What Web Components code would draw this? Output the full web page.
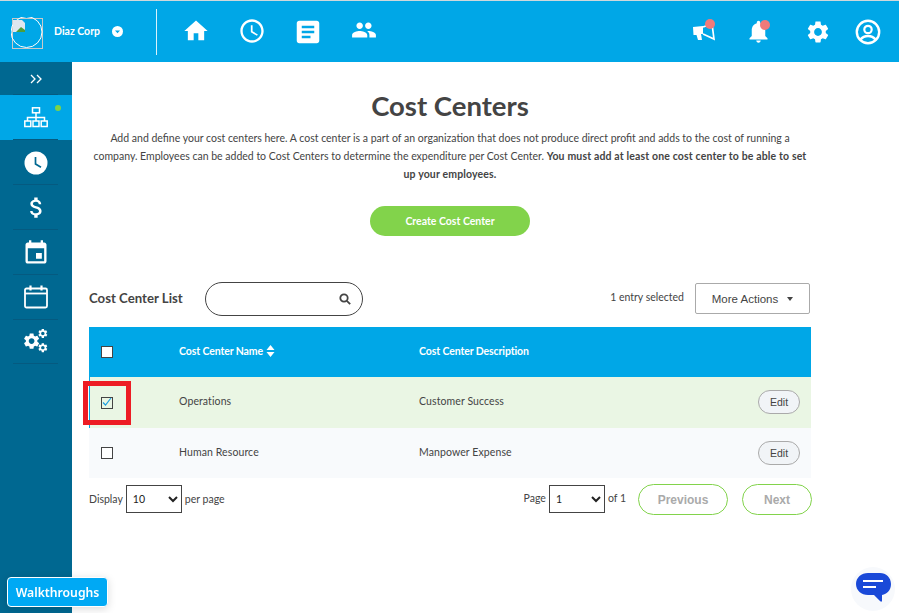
<!DOCTYPE html>
<html>
<head>
<meta charset="utf-8">
<title>Cost Centers</title>
<style>
  html, body { margin: 0; height: 100%; }
  body { font-family: Lato, "Noto Sans", sans-serif; color: #444; overflow: hidden; }
</style>
</head>
<body>
<cc-app>
  <cc-topbar slot="top"></cc-topbar>
  <cc-sidebar slot="side"></cc-sidebar>
  <cc-page>
    <cc-intro></cc-intro>
    <cc-table></cc-table>
    <cc-pager></cc-pager>
  </cc-page>
</cc-app>
<cc-walkthroughs>Walkthroughs</cc-walkthroughs>
<cc-chat></cc-chat>

<script>
const ICONS = {
  home: "M10 20v-6h4v6h5v-8h3L12 3 2 12h3v8z",
  clock: "M11.99 2C6.47 2 2 6.48 2 12s4.47 10 9.99 10C17.52 22 22 17.52 22 12S17.52 2 11.99 2zM12 20c-4.42 0-8-3.58-8-8s3.58-8 8-8 8 3.58 8 8-3.58 8-8 8zm.5-13H11v6l5.25 3.15.75-1.23-4.5-2.67z",
  article: "M19 3H5c-1.1 0-2 .9-2 2v14c0 1.1.9 2 2 2h14c1.1 0 2-.9 2-2V5c0-1.1-.9-2-2-2zm-5 14H7v-2h7v2zm3-4H7v-2h10v2zm0-4H7V7h10v2z",
  people: "M16 11c1.66 0 2.99-1.34 2.99-3S17.66 5 16 5c-1.66 0-3 1.34-3 3s1.34 3 3 3zm-8 0c1.66 0 2.99-1.34 2.99-3S9.66 5 8 5C6.34 5 5 6.34 5 8s1.34 3 3 3zm0 2c-2.33 0-7 1.17-7 3.5V19h14v-2.5c0-2.33-4.67-3.5-7-3.5zm8 0c-.29 0-.62.02-.97.05 1.16.84 1.97 1.97 1.97 3.45V19h6v-2.5c0-2.33-4.67-3.5-7-3.5z",
  bell: "M12 22c1.1 0 2-.9 2-2h-4c0 1.1.9 2 2 2zm6-6v-5c0-3.07-1.63-5.64-4.5-6.32V4c0-.83-.67-1.5-1.5-1.5s-1.5.67-1.5 1.5v.68C7.64 5.36 6 7.92 6 11v5l-2 2v1h16v-1l-2-2z",
  gear: "M19.14 12.94c.04-.3.06-.61.06-.94 0-.32-.02-.64-.07-.94l2.03-1.58c.18-.14.23-.41.12-.61l-1.92-3.32c-.12-.22-.37-.29-.59-.22l-2.39.96c-.5-.38-1.03-.7-1.62-.94l-.36-2.54c-.04-.24-.24-.41-.48-.41h-3.84c-.24 0-.43.17-.47.41l-.36 2.54c-.59.24-1.13.57-1.62.94l-2.39-.96c-.22-.08-.47 0-.59.22L2.74 8.87c-.12.21-.08.47.12.61l2.03 1.58c-.05.3-.09.63-.09.94s.02.64.07.94l-2.03 1.58c-.18.14-.23.41-.12.61l1.92 3.32c.12.22.37.29.59.22l2.39-.96c.5.38 1.03.7 1.62.94l.36 2.54c.05.24.24.41.48.41h3.84c.24 0 .44-.17.47-.41l.36-2.54c.59-.24 1.13-.56 1.62-.94l2.39.96c.22.08.47 0 .59-.22l1.92-3.32c.12-.22.07-.47-.12-.61l-2.01-1.58zM12 15.6c-1.98 0-3.6-1.62-3.6-3.6s1.62-3.6 3.6-3.6 3.6 1.62 3.6 3.6-1.62 3.6-3.6 3.6z",
  money: "M11.8 10.9c-2.27-.59-3-1.2-3-2.15 0-1.09 1.01-1.85 2.7-1.85 1.78 0 2.44.85 2.5 2.1h2.21c-.07-1.72-1.12-3.3-3.21-3.81V3h-3v2.16c-1.94.42-3.5 1.68-3.5 3.61 0 2.31 1.91 3.46 4.7 4.13 2.5.6 3 1.48 3 2.41 0 .69-.49 1.79-2.7 1.79-2.06 0-2.87-.92-2.98-2.1h-2.2c.12 2.19 1.76 3.42 3.68 3.83V21h3v-2.15c1.95-.37 3.5-1.5 3.5-3.55 0-2.84-2.43-3.81-4.7-4.4z",
  event: "M17 12h-5v5h5v-5zM16 1v2H8V1H6v2H5c-1.11 0-1.99.9-1.99 2L3 19c0 1.1.89 2 2 2h14c1.1 0 2-.9 2-2V5c0-1.1-.9-2-2-2h-1V1h-2zm3 18H5V8h14v11z"
};
const icon = (name, size) =>
  `<svg width="${size}" height="${size}" viewBox="0 0 24 24" fill="#fff"><path d="${ICONS[name]}"/></svg>`;

class CcApp extends HTMLElement {
  constructor() {
    super();
    this.attachShadow({ mode: "open" }).innerHTML = `
      <style>
        :host { display: grid; grid-template-columns: 72px 1fr; grid-template-rows: 62px 1fr; height: 613px; }
        ::slotted(cc-topbar) { grid-column: 1 / 3; }
      </style>
      <slot name="top"></slot><slot name="side"></slot><slot></slot>`;
  }
}

class CcTopbar extends HTMLElement {
  constructor() {
    super();
    this.attachShadow({ mode: "open" }).innerHTML = `
      <style>
        :host { display: flex; align-items: center; height: 62px; box-sizing: border-box; border-top: 1px solid #cfd8dc; background: #00a7e7; color: #fff; padding-left: 11px; }
        .logo { width: 32px; height: 32px; flex: none; display: block; margin-top: 2px; }
        .name { font-size: 10.500px; font-weight: 700; margin-left: 11px; width: 58px; white-space: nowrap; margin-top: -2px; }
        .caret { width: 11px; height: 11px; flex: none; display: block; }
        .div { width: 1px; height: 46px; background: rgba(255,255,255,.85); margin-left: 33px; margin-right: 11px; }
        nav { display: flex; }
        nav span { width: 56px; display: flex; justify-content: center; }
        .right { margin-left: auto; display: flex; align-items: center; padding-right: 6px; }
        .i { position: relative; width: 50px; display: flex; justify-content: center; }
        .i b { position: absolute; width: 10px; height: 10px; border-radius: 50%; background: #ef7a7a; }
        .m b { left: 26px; top: -3px; } .n b { left: 27px; top: 2px; }
        .n { margin-left: 4px; } .g { margin-left: 10px; }
        svg { display: block; }
      </style>
      <svg class="logo" viewBox="0 0 32 32" fill="none">
        <rect x="1.5" y="1.5" width="30" height="30" stroke="#c9c9c9"/>
        <circle cx="15.5" cy="15" r="15.5" stroke="#fff"/>
        <path d="M2 3h9l3 3v9H2z" fill="#dfe6ef"/><path d="M5 15l5-5 4 3v2z" fill="#4f9d3a"/>
      </svg>
      <span class="name">Diaz Corp</span>
      <svg class="caret" viewBox="0 0 11 11"><circle cx="5.5" cy="5.5" r="5.5" fill="#fff"/><path d="M3 4.4h5L5.5 7.2z" fill="#00a7e7"/></svg>
      <span class="div"></span>
      <nav>
        <span>${icon("home", 28)}</span>
        <span>${icon("clock", 28)}</span>
        <span>${icon("article", 30)}</span>
        <span>${icon("people", 26)}</span>
      </nav>
      <div class="right">
        <span class="i m">
          <svg width="24" height="20" viewBox="0 0 24 20" fill="#fff">
            <path d="M1 5l10-1v8H9l1 6H6L4.500 13 1.500 13z"/>
            <path d="M11 5l9-3 2 15-11-5" fill="none" stroke="#fff" stroke-width="1.700"/>
          </svg>
          <b></b>
        </span>
        <span class="i n">${icon("bell", 27)}<b></b></span>
        <span class="i g">${icon("gear", 26)}</span>
        <span class="i">
          <svg width="26" height="26" viewBox="0 0 26 26" fill="none" stroke="#fff">
            <circle cx="13" cy="13" r="11.200" stroke-width="2.400"/>
            <circle cx="13" cy="10.500" r="3.700" stroke-width="2.200"/>
            <path d="M5.500 20.500c2-2.500 4.500-3.500 7.500-3.500s5.500 1 7.500 3.500" stroke-width="2.600"/>
          </svg>
        </span>
      </div>`;
  }
}

class CcSidebar extends HTMLElement {
  constructor() {
    super();
    this.attachShadow({ mode: "open" }).innerHTML = `
      <style>
        :host { display: block; background: #006891; }
        .top { height: 33px; display: flex; align-items: center; justify-content: center; color: #fff; }
        .it { height: 45px; display: flex; align-items: center; justify-content: center; position: relative; }
        .it::after { content: ""; position: absolute; left: 13px; right: 14px; bottom: 0; height: 1px; background: #055a80; }
        .on { background: #00a7e7; }
        .on i { position: absolute; left: 55px; top: 10px; width: 6px; height: 6px; border-radius: 50%; background: #7ed348; }
        .on::before { content: ""; position: absolute; left: 13px; right: 14px; top: -1px; height: 1px; background: #055a80; }
        svg { display: block; }
      </style>
      <div class="top">
        <svg width="12" height="10" viewBox="0 0 12 10" fill="none" stroke="#fff" stroke-width="1.3"><path d="M1 1l4 4-4 4M7 1l4 4-4 4"/></svg>
      </div>
      <div class="it on">
        <svg width="24" height="22" viewBox="0 0 24 22" fill="none" stroke="#fff" stroke-width="1.500">
          <rect x="8.500" y=".8" width="7" height="5"/><path d="M12 5.600v5M3.500 14v-3.500h17V14M12 10.500V14"/>
          <rect x=".8" y="14" width="6" height="5.500"/><rect x="9" y="14" width="6" height="5.500"/><rect x="17.200" y="14" width="6" height="5.500"/>
        </svg>
        <i></i>
      </div>
      <div class="it">
        <svg width="24" height="24" viewBox="0 0 24 24"><circle cx="12" cy="12" r="11.500" fill="#fff"/><path d="M11.500 6v7l5.500 3.300" fill="none" stroke="#006891" stroke-width="1.700"/></svg>
      </div>
      <div class="it">${icon("money", 27)}</div>
      <div class="it">${icon("event", 28)}</div>
      <div class="it">
        <svg width="24" height="25" viewBox="0 0 24 25" fill="none" stroke="#fff" stroke-width="1.800" style="margin-top:-2px">
          <rect x="1" y="4.500" width="22" height="19" rx="1.500"/>
          <path d="M1 9.500h22"/><path d="M6.500 1.500v5M17.500 1.500v5" stroke-width="2.200"/>
        </svg>
      </div>
      <div class="it" style="margin-top:-1px">
        <svg width="24" height="24" viewBox="0 0 24 24" fill="#fff" style="margin-top:-1px">
          <g transform="translate(-2 2.500) scale(.8)"><path d="${ICONS.gear}"/></g>
          <g transform="translate(13.200 -1.200) scale(.47)"><path d="${ICONS.gear}"/></g>
          <g transform="translate(13.200 13) scale(.47)"><path d="${ICONS.gear}"/></g>
        </svg>
      </div>`;
  }
}

class CcPage extends HTMLElement {
  constructor() {
    super();
    this.attachShadow({ mode: "open" }).innerHTML = `
      <style>
        :host { display: block; background: #fff; padding: 26px 88px 0 17px; }
      </style>
      <slot></slot>`;
  }
}

class CcIntro extends HTMLElement {
  constructor() {
    super();
    this.attachShadow({ mode: "open" }).innerHTML = `
      <style>
        :host { display: block; text-align: center; }
        h1 { margin: 0; font-size: 27.500px; line-height: 35px; font-weight: 700; color: #444; }
        p { margin: 6px 4px 0; font-size: 10.500px; line-height: 18px; color: #444; }
        b { font-weight: 700; letter-spacing: .15px; }
        a { display: flex; align-items: center; justify-content: center; width: 160px; height: 30px; margin: 23px auto 0; background: #82d34b; border-radius: 15px; color: #fff; font-size: 10.500px; font-weight: 700; }
      </style>
      <h1>Cost Centers</h1>
      <p>Add and define your cost centers here. A cost center is a part of an organization that does not produce direct profit and adds to the cost of running a company. Employees can be added to Cost Centers to determine the expenditure per Cost Center. <b>You must add at least one cost center to be able to set up your employees.</b></p>
      <a>Create Cost Center</a>`;
  }
}

class CcCheck extends HTMLElement {
  constructor() {
    super();
    const on = this.hasAttribute("checked");
    this.attachShadow({ mode: "open" }).innerHTML = `
      <style>
        :host { display: block; width: 12px; height: 12px; }
        div { box-sizing: border-box; width: 12px; height: 12px; border: 1.500px solid #444; background: ${on ? "transparent" : "#fff"}; }
        svg { display: block; margin: -1px 0 0 0; }
      </style>
      <div>${on ? '<svg width="10" height="10" viewBox="0 0 10 10" fill="none" stroke="#1e9fe0" stroke-width="1.200"><path d="M1 5.500l2.500 2.500 5.500-7"/></svg>' : ""}</div>`;
  }
}

class CcTable extends HTMLElement {
  constructor() {
    super();
    const row = (name, desc, cls, checked) => `
      <div class="row ${cls}">
        <div class="c0"><cc-check ${checked ? "checked" : ""}></cc-check></div>
        <div class="c1">${name}</div>
        <div class="c2">${desc}</div>
        <div class="c3"><button>Edit</button></div>
      </div>`;
    this.attachShadow({ mode: "open" }).innerHTML = `
      <style>
        :host { display: block; margin-top: 46px; position: relative; }
        .bar { display: flex; align-items: center; height: 34px; margin-bottom: 11px; }
        .bar h2 { margin: 0 0 3px; font-size: 13.200px; font-weight: 700; color: #444; width: 116px; white-space: nowrap; }
        .search { box-sizing: border-box; width: 158px; height: 34px; border: 1px solid #444; border-radius: 17px; display: flex; align-items: center; justify-content: flex-end; padding-right: 11px; }
        .sel { margin-left: auto; font-size: 10.500px; color: #444; margin-top: -5px; margin-right: 11px; }
        .more { box-sizing: border-box; width: 115px; height: 31px; border: 1px solid #aaa; border-radius: 2px; background: #fff; font: 11.500px "Liberation Sans", sans-serif; color: #444; display: flex; align-items: center; justify-content: center; gap: 9px; margin-right: 1px; margin-top: -1px; }
        .more i { width: 0; height: 0; border: 3px solid transparent; border-top: 4px solid #444; border-bottom: 0; }
        .row { display: grid; grid-template-columns: 90px 240px 1fr 53px; align-items: center; font-size: 10.500px; color: #444; }
        .head { height: 50px; background: #00a7e7; color: #fff; font-weight: 700; letter-spacing: -.1px; }
        .a { height: 51px; background: #eaf6e4; box-shadow: inset 1px 0 #00a7e7; }
        .a button { margin-top: -1px; }
        .b { height: 50px; background: #f8fafc; }
        .c0 { padding-left: 12px; }
        .c1, .c2 { padding-bottom: 3px; }
        .a .c1, .b .c1, .a .c2, .b .c2 { letter-spacing: .1px; }
        .sort { display: inline-block; vertical-align: -2px; margin-left: 1px; }
        button { box-sizing: border-box; width: 42px; height: 24px; border: 1px solid #aaa; border-radius: 12px; background: #f1f4f7; font: 10.500px "Liberation Sans", sans-serif; color: #444; padding: 0; display: block; }
        .mark { position: absolute; left: -6px; top: 99px; box-sizing: border-box; width: 48px; height: 44px; border: 5px solid #ed1c24; }
      </style>
      <div class="bar">
        <h2>Cost Center List</h2>
        <div class="search">
          <svg width="12" height="12" viewBox="0 0 12 12" fill="none" stroke="#444" stroke-width="1.800"><circle cx="5" cy="5" r="3.700"/><path d="M7.800 7.800l3.400 3.400"/></svg>
        </div>
        <span class="sel">1 entry selected</span>
        <div class="more">More Actions <i></i></div>
      </div>
      <div class="row head">
        <div class="c0"><cc-check></cc-check></div>
        <div class="c1">Cost Center Name <svg class="sort" width="9" height="12" viewBox="0 0 9 12" fill="#fff"><path d="M4.500 0l4 5H.5zM4.500 12l-4-5h8z"/></svg></div>
        <div class="c2">Cost Center Description</div>
        <div></div>
      </div>
      ${row("Operations", "Customer Success", "a", true)}
      ${row("Human Resource", "Manpower Expense", "b", false)}
      <div class="mark"></div>`;
  }
}

class CcPager extends HTMLElement {
  constructor() {
    super();
    this.attachShadow({ mode: "open" }).innerHTML = `
      <style>
        :host { display: flex; align-items: center; height: 31px; margin-top: 6px; font-size: 10.500px; color: #444; }
        select { width: 56px; height: 28px; border: 1px solid #444; background: #fff; font: 10.500px Lato, sans-serif; color: #222; margin: 0 3px; padding: 0 0 0 2px; border-radius: 0; }
        .left, .right { display: flex; align-items: center; }
        .left { margin-top: -1px; }
        .right { margin-left: auto; margin-right: -1px; }
        .right select { margin-top: -1px; }
        .right span { margin-top: -3px; }
        a { box-sizing: border-box; height: 31px; border: 1.500px solid #82d34b; border-radius: 16px; color: #aaa; font: 700 12px "Liberation Sans", sans-serif; display: flex; align-items: center; justify-content: center; }
        .prev { width: 90px; margin-left: 12px; }
        .next { width: 70px; margin-left: 14px; }
      </style>
      <div class="left"><span>Display</span><select><option>10</option><option>25</option></select><span>per page</span></div>
      <div class="right"><span>Page</span><select><option>1</option></select><span>of 1</span>
        <a class="prev">Previous</a><a class="next">Next</a>
      </div>`;
  }
}

class CcWalkthroughs extends HTMLElement {
  constructor() {
    super();
    this.attachShadow({ mode: "open" }).innerHTML = `
      <style>
        :host { position: fixed; left: 7px; top: 577px; box-sizing: border-box; width: 101px; height: 30px; background: #00a9f4; border: 1px solid #fff; border-radius: 4px; color: #fff; font: 600 12.200px "Noto Sans", sans-serif; display: flex; align-items: center; justify-content: center; box-shadow: 0 2px 8px rgba(0,0,0,.15); }
      </style>
      <slot></slot>`;
  }
}

class CcChat extends HTMLElement {
  constructor() {
    super();
    this.attachShadow({ mode: "open" }).innerHTML = `
      <style>
        :host { position: fixed; left: 851px; top: 567px; width: 44px; height: 44px; border-radius: 50%; background: #f7f9fc; display: block; }
        svg { display: block; margin: 6px 0 0 5px; }
      </style>
      <svg width="35" height="33" viewBox="0 0 35 33">
        <path d="M12 0h12c6 0 11 4.500 11 11s-4 10-9 11v5.500c0 1.500-1 1.500-2 .5l-6-6h-6C5.500 22 0 17.500 0 11S5.500 0 12 0z" fill="#1a49d8"/>
        <path d="M7 8h20M7 14h13" stroke="#fff" stroke-width="1.800" fill="none"/>
      </svg>`;
  }
}

customElements.define("cc-app", CcApp);
customElements.define("cc-topbar", CcTopbar);
customElements.define("cc-sidebar", CcSidebar);
customElements.define("cc-page", CcPage);
customElements.define("cc-intro", CcIntro);
customElements.define("cc-check", CcCheck);
customElements.define("cc-table", CcTable);
customElements.define("cc-pager", CcPager);
customElements.define("cc-walkthroughs", CcWalkthroughs);
customElements.define("cc-chat", CcChat);
</script>
</body>
</html>
